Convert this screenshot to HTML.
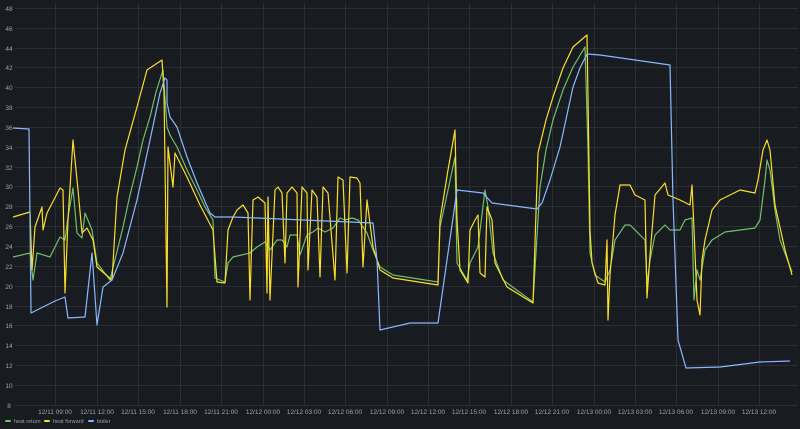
<!DOCTYPE html><html><head><style>
html,body{margin:0;padding:0;background:#181b1f;width:800px;height:429px;overflow:hidden}
svg{display:block;font-family:"Liberation Sans",sans-serif}
</style></head><body>
<svg width="800" height="429" viewBox="0 0 800 429">
<rect width="800" height="429" fill="#181b1f"/>
<g stroke="#2a2d31" stroke-width="1">
<line x1="15" x2="798" y1="8.5" y2="8.5"/><line x1="15" x2="798" y1="28.5" y2="28.5"/><line x1="15" x2="798" y1="48.5" y2="48.5"/><line x1="15" x2="798" y1="67.5" y2="67.5"/><line x1="15" x2="798" y1="87.5" y2="87.5"/><line x1="15" x2="798" y1="107.5" y2="107.5"/><line x1="15" x2="798" y1="127.5" y2="127.5"/><line x1="15" x2="798" y1="147.5" y2="147.5"/><line x1="15" x2="798" y1="167.5" y2="167.5"/><line x1="15" x2="798" y1="186.5" y2="186.5"/><line x1="15" x2="798" y1="206.5" y2="206.5"/><line x1="15" x2="798" y1="226.5" y2="226.5"/><line x1="15" x2="798" y1="246.5" y2="246.5"/><line x1="15" x2="798" y1="266.5" y2="266.5"/><line x1="15" x2="798" y1="286.5" y2="286.5"/><line x1="15" x2="798" y1="306.5" y2="306.5"/><line x1="15" x2="798" y1="325.5" y2="325.5"/><line x1="15" x2="798" y1="345.5" y2="345.5"/><line x1="15" x2="798" y1="365.5" y2="365.5"/><line x1="15" x2="798" y1="385.5" y2="385.5"/><line x1="15" x2="798" y1="405.5" y2="405.5"/>
<line y1="3" y2="405" x1="55.5" x2="55.5"/><line y1="3" y2="405" x1="97.5" x2="97.5"/><line y1="3" y2="405" x1="138.5" x2="138.5"/><line y1="3" y2="405" x1="180.5" x2="180.5"/><line y1="3" y2="405" x1="221.5" x2="221.5"/><line y1="3" y2="405" x1="263.5" x2="263.5"/><line y1="3" y2="405" x1="304.5" x2="304.5"/><line y1="3" y2="405" x1="345.5" x2="345.5"/><line y1="3" y2="405" x1="387.5" x2="387.5"/><line y1="3" y2="405" x1="428.5" x2="428.5"/><line y1="3" y2="405" x1="469.5" x2="469.5"/><line y1="3" y2="405" x1="511.5" x2="511.5"/><line y1="3" y2="405" x1="552.5" x2="552.5"/><line y1="3" y2="405" x1="594.5" x2="594.5"/><line y1="3" y2="405" x1="635.5" x2="635.5"/><line y1="3" y2="405" x1="676.5" x2="676.5"/><line y1="3" y2="405" x1="718.5" x2="718.5"/><line y1="3" y2="405" x1="759.5" x2="759.5"/>
</g>
<g fill="#9fa3a8" font-size="6.5" text-anchor="middle">
<text x="9" y="11">48</text><text x="9" y="31">46</text><text x="9" y="51">44</text><text x="9" y="70">42</text><text x="9" y="90">40</text><text x="9" y="110">38</text><text x="9" y="130">36</text><text x="9" y="150">34</text><text x="9" y="170">32</text><text x="9" y="189">30</text><text x="9" y="209">28</text><text x="9" y="229">26</text><text x="9" y="249">24</text><text x="9" y="269">22</text><text x="9" y="289">20</text><text x="9" y="309">18</text><text x="9" y="328">16</text><text x="9" y="348">14</text><text x="9" y="368">12</text><text x="9" y="388">10</text><text x="9" y="408">8</text>
<text x="55" y="414">12/11 09:00</text><text x="97" y="414">12/11 12:00</text><text x="138" y="414">12/11 15:00</text><text x="180" y="414">12/11 18:00</text><text x="221" y="414">12/11 21:00</text><text x="263" y="414">12/12 00:00</text><text x="304" y="414">12/12 03:00</text><text x="345" y="414">12/12 06:00</text><text x="387" y="414">12/12 09:00</text><text x="428" y="414">12/12 12:00</text><text x="469" y="414">12/12 15:00</text><text x="511" y="414">12/12 18:00</text><text x="552" y="414">12/12 21:00</text><text x="594" y="414">12/13 00:00</text><text x="635" y="414">12/13 03:00</text><text x="676" y="414">12/13 06:00</text><text x="718" y="414">12/13 09:00</text><text x="759" y="414">12/13 12:00</text>
</g>
<g fill="none" stroke-width="1.2" stroke-linejoin="round">
<polyline stroke="#73bf69" points="13,257 30,253 33,280 37,253 50,257 60,237 65,240 68,217 73,188 77,233 82,238 85,213 92,230 97,263 110,280 123,227 130,195 137,167 143,140 150,117 156,92 163,70 167,127 170,135 177,147 187,170 197,190 205,207 213,220 215,278 225,282 228,263 233,257 250,253 257,247 265,242 270,250 277,240 282,240 287,247 290,235 297,235 300,255 307,235 313,232 318,228 325,232 333,228 340,218 345,220 352,218 358,220 363,227 367,233 373,250 380,267 393,275 438,282 440,227 448,190 455,157 457,263 467,280 470,263 478,247 485,190 488,207 493,253 503,280 533,302 540,187 546,150 553,120 563,90 573,67 585,47 588,150 590,253 595,275 605,282 610,270 615,240 625,225 630,225 640,235 645,240 647,285 650,260 655,235 665,225 670,230 680,230 685,220 692,218 694,300 697,270 700,280 705,250 712,240 725,232 755,228 760,220 765,180 767,160 770,170 775,210 780,240 792,272"/>
<polyline stroke="#fade2a" points="13,217 30,212 32,270 35,227 42,207 43,230 47,213 60,188 63,190 65,293 68,220 73,140 78,190 82,233 87,228 93,240 97,267 112,280 117,197 125,150 137,107 147,70 162,60 164,93 167,307 168,147 173,187 175,153 187,177 200,205 213,230 217,282 225,283 228,230 233,217 237,210 243,205 248,213 250,300 253,200 258,197 265,203 267,293 268,197 270,300 275,190 278,187 282,193 285,263 287,193 292,187 297,193 298,287 302,187 307,193 308,270 312,190 317,197 320,277 323,187 328,193 335,280 338,177 343,180 347,273 350,177 357,178 360,183 363,267 367,200 373,247 380,270 393,278 438,285 440,220 448,170 455,130 457,220 460,270 468,283 470,230 475,220 478,215 480,273 485,277 487,207 492,220 495,263 507,287 533,303 538,153 546,120 553,97 563,68 573,47 587,35 588,97 590,230 592,263 598,283 605,285 607,240 608,320 610,275 615,215 620,185 630,185 635,195 645,200 647,298 650,255 655,195 665,183 668,195 680,200 690,205 692,185 694,230 697,300 700,315 702,260 705,240 712,210 720,200 740,190 755,193 758,180 763,150 767,140 770,150 775,205 785,250 792,275"/>
<polyline stroke="#8ab8ff" points="13,128 29,129 31,313 45,306 55,301 65,297 68,318 85,317 92,253 97,325 103,287 112,280 123,253 137,200 150,140 160,93 165,78 167,80 167,103 170,117 177,127 187,157 197,183 210,213 215,217 233,217 373,223 377,260 380,330 410,323 438,323 457,190 483,193 492,203 537,209 542,203 550,180 560,147 573,87 580,68 587,54 600,55 670,65 673,200 678,340 686,368 720,367 760,362 790,361"/>
</g>
<g font-size="5.5" fill="#9fa3a8">
<rect x="5" y="420" width="6" height="2" rx="1" fill="#73bf69"/><text x="14" y="423">heat return</text>
<rect x="44" y="420" width="6" height="2" rx="1" fill="#fade2a"/><text x="53" y="423">heat forward</text>
<rect x="88" y="420" width="6" height="2" rx="1" fill="#8ab8ff"/><text x="97" y="423">boiler</text>
</g>
</svg>
</body></html>
